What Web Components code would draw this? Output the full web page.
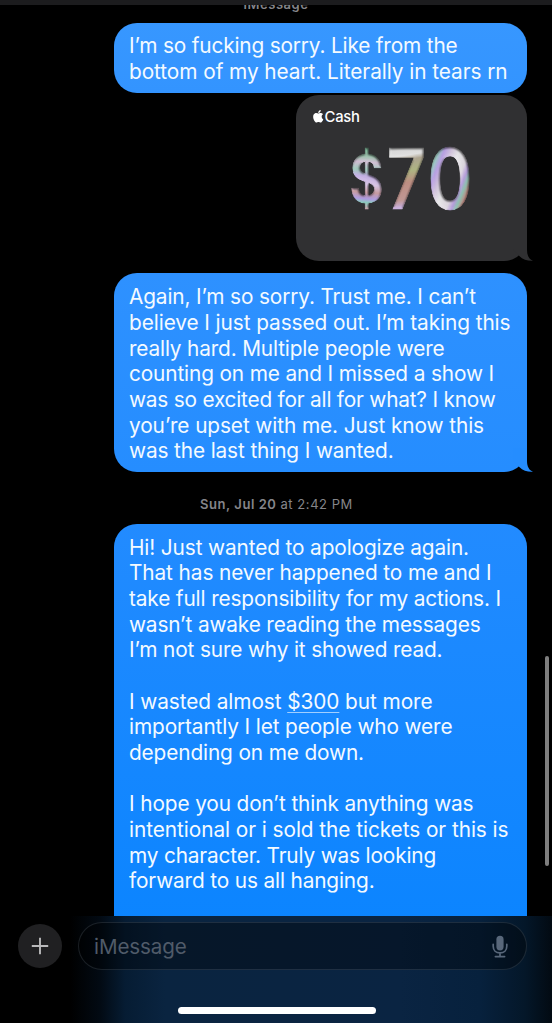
<!DOCTYPE html>
<html lang="en">
<head>
<meta charset="utf-8">
<title>Messages</title>
<style>
  body {
    margin: 0;
    background: #000;
    font-family: Inter, "Liberation Sans", sans-serif;
    font-optical-sizing: none;
  }
</style>
</head>
<body>
<chat-screen>
  <time-stamp class="service"><b slot="day">iMessage</b></time-stamp>

  <message-bubble style="--from: #3797ff; --to: #3394ff; margin-top: 8.5px">
    <text-line width="328.5">I’m so fucking sorry. Like from the</text-line>
    <text-line width="378.5">bottom of my heart. Literally in tears rn</text-line>
  </message-bubble>

  <cash-card style="margin-top: 2.1px"></cash-card>

  <message-bubble tail style="--from: #2e91ff; --to: #258dff; margin-top: 12px">
    <text-line width="347">Again, I’m so sorry. Trust me. I can’t</text-line>
    <text-line width="381.5">believe I just passed out. I’m taking this</text-line>
    <text-line width="315.5">really hard. Multiple people were</text-line>
    <text-line width="365">counting on me and I missed a show I</text-line>
    <text-line width="366.5">was so excited for all for what? I know</text-line>
    <text-line width="355">you’re upset with me. Just know this</text-line>
    <text-line width="264.5">was the last thing I wanted.</text-line>
  </message-bubble>

  <time-stamp><b slot="day">Sun, Jul 20</b> at 2:42 PM</time-stamp>

  <message-bubble style="--from: #228bff; --to: #0a84ff; flex: 0 0 430px">
    <text-line width="340">Hi! Just wanted to apologize again.</text-line>
    <text-line width="362.5">That has never happened to me and I</text-line>
    <text-line width="372">take full responsibility for my actions. I</text-line>
    <text-line width="351.5">wasn’t awake reading the messages</text-line>
    <text-line width="313.5">I’m not sure why it showed read.</text-line>
    <text-line></text-line>
    <text-line width="303.5">I wasted almost <u>$300</u> but more</text-line>
    <text-line width="323.5">importantly I let people who were</text-line>
    <text-line width="235">depending on me down.</text-line>
    <text-line></text-line>
    <text-line width="344.5">I hope you don’t think anything was</text-line>
    <text-line width="379.5">intentional or i sold the tickets or this is</text-line>
    <text-line width="307">my character. Truly was looking</text-line>
    <text-line width="245.5">forward to us all hanging.</text-line>
  </message-bubble>

  <message-composer slot="composer" placeholder="iMessage"></message-composer>
</chat-screen>

<script>
class ChatScreen extends HTMLElement {
  constructor() {
    super();
    this.attachShadow({ mode: 'open' });
    this.shadowRoot.innerHTML = `
      <style>
        :host {
          display: grid;
          grid-template-rows: 5px 911px 107px;
          position: relative;
          width: 552px;
          height: 1023px;
          overflow: hidden;
          background: #000;
        }
        .header {
          background: #1c1c1e;
        }
        .thread {
          display: flex;
          flex-direction: column;
          align-items: flex-end;
          box-sizing: border-box;
          padding-right: 25px;
          overflow: hidden;
        }
        .scrollbar {
          position: absolute;
          top: 656px;
          right: 3px;
          width: 4px;
          height: 210px;
          border-radius: 2px;
          background: #7e7e7e;
        }
      </style>
      <div class="header"></div>
      <div class="thread"><slot></slot></div>
      <slot name="composer"></slot>
      <div class="scrollbar"></div>
    `;
  }
}

// One line of a message, tracked so that it fills the given width.
class TextLine extends HTMLElement {
  constructor() {
    super();
    this.attachShadow({ mode: 'open' });
    this.shadowRoot.innerHTML = `
      <style>
        :host {
          display: block;
          height: 25.7px;
          line-height: 25.7px;
          white-space: nowrap;
        }
        ::slotted(u) {
          text-decoration-thickness: 1px;
          text-underline-offset: 3px;
          text-decoration-color: rgba(255, 255, 255, 0.6);
        }
      </style>
      <span><slot></slot></span>
    `;
  }

  connectedCallback() {
    const width = parseFloat(this.getAttribute('width'));
    if (!width) return;
    const span = this.shadowRoot.querySelector('span');
    const natural = span.getBoundingClientRect().width;
    const spacing = (width - natural) / this.textContent.length;
    span.style.letterSpacing = spacing.toFixed(3) + 'px';
  }
}

const TAIL = `
  <svg class="tail" width="20" height="24" viewBox="0 0 20 24">
    <path d="M14 0V13C14 18.5 16 22.2 20 23.8C15 24.2 10 22.6 6.3 19L0 12V0Z"/>
  </svg>
`;

class MessageBubble extends HTMLElement {
  constructor() {
    super();
    this.attachShadow({ mode: 'open' });
  }

  connectedCallback() {
    this.shadowRoot.innerHTML = `
      <style>
        :host {
          display: block;
          position: relative;
          flex: none;
          box-sizing: border-box;
          width: 413.5px;
          padding: 10.8px 15px 8.2px 15.5px;
          border-radius: 23px;
          background: linear-gradient(var(--from), var(--to));
          color: #f4faff;
          font-size: 20.8px;
        }
        .tail {
          position: absolute;
          right: -6px;
          bottom: 0;
          fill: var(--to);
        }
      </style>
      <slot></slot>
      ${this.hasAttribute('tail') ? TAIL : ''}
    `;
  }
}

class TimeStamp extends HTMLElement {
  constructor() {
    super();
    this.attachShadow({ mode: 'open' });
    this.shadowRoot.innerHTML = `
      <style>
        :host {
          display: flex;
          flex: none;
          align-self: center;
          align-items: center;
          justify-content: center;
          gap: 4px;
          height: 51.5px;
          padding-top: 11.5px;
          margin-left: 26px;
          box-sizing: border-box;
          color: #85858a;
          font-size: 13px;
          letter-spacing: 0.55px;
          white-space: nowrap;
        }
        :host(.service) {
          align-items: flex-start;
          height: 10px;
          padding: 0;
          margin: -1px 0 0 29px;
          line-height: 0;
        }
        ::slotted(b) {
          font-weight: 600;
        }
      </style>
      <slot name="day"></slot><span><slot></slot></span>
    `;
  }
}

class CashCard extends HTMLElement {
  constructor() {
    super();
    this.attachShadow({ mode: 'open' });
    this.shadowRoot.innerHTML = `
      <style>
        :host {
          display: block;
          position: relative;
          flex: none;
          box-sizing: border-box;
          width: 231px;
          height: 166.5px;
          padding: 14px 17px;
          border-radius: 23px;
          background: #303032;
          color: #fff;
        }
        .brand {
          display: flex;
          align-items: center;
          gap: 1px;
          height: 16px;
          font-size: 14.8px;
          font-weight: 500;
          letter-spacing: -0.2px;
        }
        .brand svg {
          margin-top: -1px;
        }
        .amount {
          display: block;
          margin: 15.5px 0 0 30px;
          overflow: visible;
        }
        .tail {
          position: absolute;
          right: -6px;
          bottom: 0;
          fill: #303032;
        }
      </style>
      <div class="brand">
        <svg width="10.5" height="12.5" viewBox="2 0 20 24" fill="#fff">
          <path d="M12.152 6.896c-.948 0-2.415-1.078-3.96-1.04-2.04.027-3.91 1.183-4.961 3.014-2.117 3.675-.546 9.103 1.519 12.09 1.013 1.454 2.208 3.09 3.792 3.039 1.52-.065 2.09-.987 3.935-.987 1.831 0 2.35.987 3.96.948 1.637-.026 2.676-1.48 3.676-2.948 1.156-1.688 1.636-3.325 1.662-3.415-.039-.013-3.182-1.221-3.22-4.857-.026-3.04 2.48-4.494 2.597-4.559-1.429-2.09-3.623-2.324-4.39-2.376-2-.156-3.675 1.09-4.61 1.09zM15.53 3.83c.843-1.012 1.4-2.427 1.245-3.83-1.207.052-2.662.805-3.532 1.818-.78.896-1.454 2.338-1.273 3.714 1.338.104 2.715-.688 3.559-1.701"/>
        </svg>
        <span>Cash</span>
      </div>
      <svg class="amount" width="130" height="76" viewBox="0 0 130 76">
        <defs>
          <linearGradient id="foil-sign" gradientUnits="userSpaceOnUse" x1="30" y1="7" x2="26" y2="70">
            <stop offset="0.05" stop-color="#7fb89a"/>
            <stop offset="0.15" stop-color="#a5c9b5"/>
            <stop offset="0.24" stop-color="#d6c3d8"/>
            <stop offset="0.36" stop-color="#a3cfc0"/>
            <stop offset="0.46" stop-color="#c9b4ea"/>
            <stop offset="0.6" stop-color="#dcc8e8"/>
            <stop offset="0.72" stop-color="#cda0a6"/>
            <stop offset="0.82" stop-color="#b39fe6"/>
            <stop offset="0.88" stop-color="#8fcfc2"/>
            <stop offset="0.98" stop-color="#c9a6ae"/>
          </linearGradient>
          <linearGradient id="foil-seven" gradientUnits="userSpaceOnUse" x1="66" y1="7" x2="74" y2="70">
            <stop offset="0" stop-color="#b9babb"/>
            <stop offset="0.06" stop-color="#e0e0e0"/>
            <stop offset="0.15" stop-color="#e6e6e6"/>
            <stop offset="0.22" stop-color="#b3a995"/>
            <stop offset="0.4" stop-color="#b4ba85"/>
            <stop offset="0.58" stop-color="#c29286"/>
            <stop offset="0.84" stop-color="#c79c98"/>
            <stop offset="0.95" stop-color="#cdb4e0"/>
          </linearGradient>
          <linearGradient id="foil-zero" gradientUnits="userSpaceOnUse" x1="104" y1="24" x2="156" y2="50">
            <stop offset="0" stop-color="#b7d0a9"/>
            <stop offset="0.1" stop-color="#9fcfc8"/>
            <stop offset="0.2" stop-color="#bda4e8"/>
            <stop offset="0.34" stop-color="#d8cbe2"/>
            <stop offset="0.48" stop-color="#ececee"/>
            <stop offset="0.68" stop-color="#e2dce4"/>
            <stop offset="0.78" stop-color="#bba2e2"/>
            <stop offset="0.86" stop-color="#92c6b6"/>
            <stop offset="0.95" stop-color="#c58f88"/>
          </linearGradient>
          <!-- Splits the glyphs into a bright face and a darker bevelled edge. -->
          <filter id="bevel" x="-5%" y="-10%" width="110%" height="120%" color-interpolation-filters="sRGB">
            <feGaussianBlur in="SourceAlpha" stdDeviation="1.3" result="soft"/>
            <feDiffuseLighting in="soft" surfaceScale="2.4" diffuseConstant="1.2" lighting-color="#fff" result="light">
              <feDistantLight azimuth="125" elevation="55"/>
            </feDiffuseLighting>
            <feComposite in="SourceGraphic" in2="light" operator="arithmetic" k1="0.6" k2="0.38" result="lit"/>
            <feComposite in="lit" in2="SourceAlpha" operator="in"/>
          </filter>
        </defs>
        <text stroke-width="1" filter="url(#bevel)" transform="scale(0.82 1)" font-weight="600"><tspan x="7.5" y="62" font-size="65" fill="url(#foil-sign)" stroke="url(#foil-sign)">$</tspan><tspan x="53.5" y="69" font-size="83.5" fill="url(#foil-seven)" stroke="url(#foil-seven)">7</tspan><tspan x="103" y="69" font-size="83.5" fill="url(#foil-zero)" stroke="url(#foil-zero)">0</tspan></text>
      </svg>
      ${TAIL}
    `;
  }
}

class MessageComposer extends HTMLElement {
  constructor() {
    super();
    this.attachShadow({ mode: 'open' });
  }

  connectedCallback() {
    this.shadowRoot.innerHTML = `
      <style>
        :host {
          display: flex;
          flex-direction: column;
          box-sizing: border-box;
          height: 107px;
          padding-top: 6px;
          background: linear-gradient(90deg, #000 70px, #020a13 100px, #061c33 125px, #0a2440 165px, #0a2442 400px, #07213d 480px, #041729 525px, #020a12 552px);
        }
        .row {
          display: flex;
          align-items: center;
          gap: 16px;
          padding: 0 25px 0 18px;
        }
        .plus {
          display: flex;
          align-items: center;
          justify-content: center;
          width: 44px;
          height: 44px;
          border-radius: 50%;
          background: #202022;
        }
        .field {
          display: flex;
          flex: 1;
          align-items: center;
          justify-content: space-between;
          box-sizing: border-box;
          height: 48px;
          padding: 0 18px 0 15px;
          border: 1.5px solid rgba(130, 145, 160, 0.2);
          border-radius: 24px;
          background: rgba(0, 0, 0, 0.35);
          color: #505b69;
          font-size: 20.6px;
          letter-spacing: -0.1px;
        }
        .home {
          align-self: center;
          width: 198px;
          height: 7px;
          margin: 37px 0 0 1px;
          border-radius: 4px;
          background: #fff;
        }
      </style>
      <div class="row">
        <div class="plus">
          <svg width="18" height="18" viewBox="0 0 18 18" stroke="#b9b9bb" stroke-width="1.9">
            <path d="M9 0.8V17.2M0.8 9H17.2"/>
          </svg>
        </div>
        <div class="field">
          <span>${this.getAttribute('placeholder')}</span>
          <svg width="16" height="23" viewBox="0 0 16 23" fill="none" stroke="#58677a" stroke-width="1.7" stroke-linecap="round">
            <rect x="4.4" y="0.8" width="7.2" height="14.6" rx="3.6" fill="#58677a" stroke="none"/>
            <path d="M1.2 9.3V11.2C1.2 15.3 4 17.9 8 17.9S14.8 15.3 14.8 11.2V9.3M8 18V21.5M3.4 21.6H12.6"/>
          </svg>
        </div>
      </div>
      <div class="home"></div>
    `;
  }
}

customElements.define('chat-screen', ChatScreen);
customElements.define('message-bubble', MessageBubble);
customElements.define('text-line', TextLine);
customElements.define('time-stamp', TimeStamp);
customElements.define('cash-card', CashCard);
customElements.define('message-composer', MessageComposer);
</script>
</body>
</html>
